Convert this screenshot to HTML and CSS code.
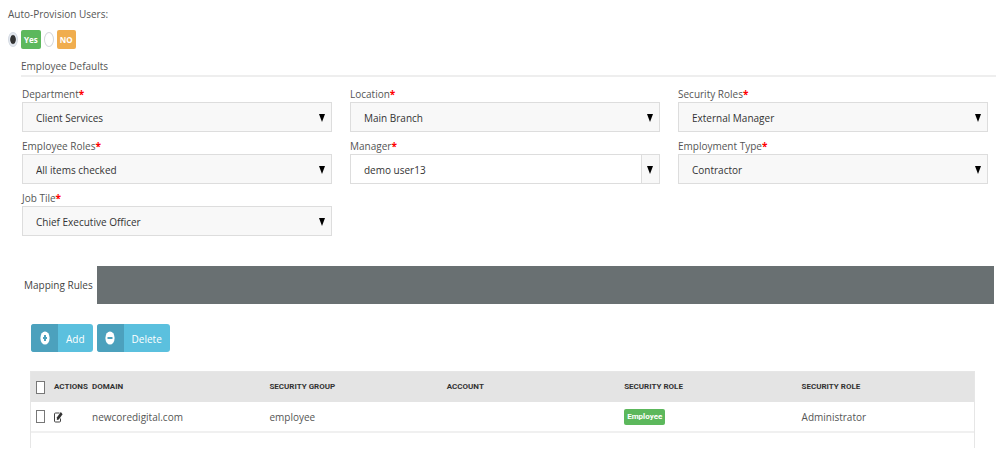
FILE: index.html
```html
<!DOCTYPE html>
<html lang="en">
<head>
    <meta charset="UTF-8">
    <meta name="viewport" content="width=device-width, initial-scale=1.0">
    <title>User Provisioning</title>
    <link rel="stylesheet" href="styles.css">
</head>
<body>
    <form class="provision-form">
        <fieldset class="provision">
            <legend>Auto-Provision Users:</legend>
            <div class="radio-row">
                <input type="radio" id="auto-yes" name="auto" value="yes" checked>
                <label for="auto-yes" class="badge badge-success">Yes</label>
                <input type="radio" id="auto-no" name="auto" value="no">
                <label for="auto-no" class="badge badge-warning">NO</label>
            </div>
        </fieldset>

        <section class="defaults">
            <h2>Employee Defaults</h2>
            <div class="fields">
                <div class="field">
                    <label for="department">Department<span class="required">*</span></label>
                    <div class="select-wrap">
                        <select id="department"><option>Client Services</option></select>
                    </div>
                </div>
                <div class="field">
                    <label for="location">Location<span class="required">*</span></label>
                    <div class="select-wrap">
                        <select id="location"><option>Main Branch</option></select>
                    </div>
                </div>
                <div class="field">
                    <label for="security-roles">Security Roles<span class="required">*</span></label>
                    <div class="select-wrap">
                        <select id="security-roles"><option>External Manager</option></select>
                    </div>
                </div>
                <div class="field">
                    <label for="employee-roles">Employee Roles<span class="required">*</span></label>
                    <div class="select-wrap">
                        <select id="employee-roles"><option>All items checked</option></select>
                    </div>
                </div>
                <div class="field">
                    <label for="manager">Manager<span class="required">*</span></label>
                    <div class="select-wrap combo">
                        <select id="manager"><option>demo user13</option></select>
                    </div>
                </div>
                <div class="field">
                    <label for="employment-type">Employment Type<span class="required">*</span></label>
                    <div class="select-wrap">
                        <select id="employment-type"><option>Contractor</option></select>
                    </div>
                </div>
                <div class="field">
                    <label for="job-title">Job Tile<span class="required">*</span></label>
                    <div class="select-wrap">
                        <select id="job-title"><option>Chief Executive Officer</option></select>
                    </div>
                </div>
            </div>
        </section>
    </form>

    <nav class="tabs">
        <a href="#mapping-rules" class="tab">Mapping Rules</a>
    </nav>

    <section id="mapping-rules" class="rules">
        <div class="toolbar">
            <button type="button" class="btn">
                <span class="btn-icon">
                    <svg viewBox="0 0 10 14" width="10" height="14" aria-hidden="true">
                        <ellipse cx="5" cy="7" rx="4.6" ry="6.6" fill="#fff"/>
                        <path d="M5 4v6M3 7h4" stroke="#4ca1bd" stroke-width="2"/>
                    </svg>
                </span>
                <span class="btn-text">Add</span>
            </button>
            <button type="button" class="btn">
                <span class="btn-icon">
                    <svg viewBox="0 0 10 14" width="10" height="14" aria-hidden="true">
                        <ellipse cx="5" cy="7" rx="4.6" ry="6.6" fill="#fff"/>
                        <path d="M2.5 7h5" stroke="#4ca1bd" stroke-width="2"/>
                    </svg>
                </span>
                <span class="btn-text">Delete</span>
            </button>
        </div>

        <div class="grid">
            <table>
                <colgroup>
                    <col class="col-check">
                    <col class="col-actions">
                    <col span="5">
                </colgroup>
                <thead>
                    <tr>
                        <th><input type="checkbox" aria-label="Select all"></th>
                        <th>ACTIONS</th>
                        <th>DOMAIN</th>
                        <th>SECURITY GROUP</th>
                        <th>ACCOUNT</th>
                        <th>SECURITY ROLE</th>
                        <th>SECURITY ROLE</th>
                    </tr>
                </thead>
                <tbody>
                    <tr>
                        <td><input type="checkbox" aria-label="Select row"></td>
                        <td>
                            <button type="button" class="edit" aria-label="Edit">
                                <svg viewBox="0 0 9 12" width="9" height="12" aria-hidden="true">
                                    <path d="M5.5 2H1.5Q.5 2 .5 3V10Q.5 11 1.5 11H5.5Q6.5 11 6.5 10V7.5" fill="none" stroke="#444"/>
                                    <path d="M3 6.2L6.8 1 8.6 3.2 4.8 8.6 2.8 9z" fill="#333"/>
                                </svg>
                            </button>
                        </td>
                        <td>newcoredigital.com</td>
                        <td>employee</td>
                        <td></td>
                        <td><span class="badge badge-success badge-role">Employee</span></td>
                        <td>Administrator</td>
                    </tr>
                </tbody>
            </table>
        </div>
    </section>
</body>
</html>
```

FILE: styles.css
```css
* { box-sizing: border-box; }

body {
    margin: 0;
    padding: 6px 8px 16px;
    background: #fff;
    color: #555;
    font-family: "Open Sans", sans-serif;
    font-size: 10px;
    line-height: 16px;
}

button, select, input { font: inherit; margin: 0; }

/* auto provision */
.provision { border: 0; margin: 0; padding: 0; }
.provision legend { padding: 0; }
.radio-row {
    display: flex;
    align-items: center;
    gap: 3px;
    margin-top: 8px;
}
.radio-row input {
    appearance: none;
    width: 10px;
    height: 15px;
    border: 1px solid #d5d8dc;
    border-radius: 50%;
    background: #fff;
}
.radio-row input:checked {
    border-color: #d5dbe3;
    background: radial-gradient(ellipse at center, #333 42%, #e4e9f0 56%);
}

.badge {
    border-radius: 2px;
    color: #fff;
    font-size: 8px;
    font-weight: bold;
    line-height: 19px;
    padding: 0 3px;
}
.badge-success { background: #5cb85c; }
.badge-warning { background: #f0ad4e; }
.badge-role {
    display: inline-block;
    font-family: Roboto, sans-serif;
    line-height: 16px;
    vertical-align: middle;
}

/* employee defaults */
.defaults { margin: 9px 0 0 13px; }
.defaults h2 {
    margin: 0;
    padding-bottom: 1px;
    border-bottom: 2px solid #eee;
    font-size: 10px;
    font-weight: normal;
}
.fields {
    display: grid;
    grid-template-columns: repeat(3, 1fr);
    column-gap: 18px;
    row-gap: 6px;
    margin: 9px 8px 0 1px;
}
.field label { display: block; }
.required { color: #f00; font-weight: bold; }

.select-wrap {
    position: relative;
    height: 30px;
    border: 1px solid #ddd;
    background: #f8f8f8;
}
.select-wrap::after {
    content: "";
    position: absolute;
    right: 6px;
    top: 11px;
    border: 3px solid transparent;
    border-top: 8px solid #000;
    border-bottom: 0;
    pointer-events: none;
}
.select-wrap select {
    appearance: none;
    width: 100%;
    height: 100%;
    padding: 2px 24px 0 13px;
    border: 0;
    background: transparent;
    color: #333;
}
.combo { background: linear-gradient(to left, #f8f8f8 17px, #ddd 17px, #ddd 18px, #fff 18px); }

/* tabs */
.tabs {
    display: flex;
    margin: 30px 2px 0 4px;
    background: #697072;
}
.tab {
    padding: 12px 4px 12px 12px;
    background: #fff;
    color: #444;
    line-height: 14px;
    text-decoration: none;
}

/* mapping rules */
.rules { padding: 20px 21px 0 22px; }
.toolbar { display: flex; gap: 4px; padding-left: 1px; }
.btn {
    display: flex;
    height: 28px;
    padding: 0;
    overflow: hidden;
    border: 0;
    border-radius: 3px;
    background: #5bc0de;
    color: #fff;
}
.btn-icon {
    display: flex;
    align-items: center;
    justify-content: center;
    width: 27px;
    height: 100%;
    background: #4ca1bd;
}
.btn-text { padding: 0 8px; line-height: 30px; }

.grid {
    min-height: 77px;
    margin-top: 19px;
    border: 1px solid #e6e6e6;
    border-bottom: 0;
}
table {
    width: 100%;
    border-collapse: collapse;
    table-layout: fixed;
}
.col-check { width: 18px; }
.col-actions { width: 38px; }
th, td { padding: 0 0 0 5px; text-align: left; }
th {
    height: 30px;
    background: #e4e4e4;
    color: #333;
    font-family: Roboto, sans-serif;
    font-size: 8px;
    white-space: nowrap;
}
td {
    height: 30px;
    border-bottom: 2px solid #f0f0f0;
}
table input {
    appearance: none;
    display: block;
    width: 9px;
    height: 13px;
    border: 1px solid #777;
    background: #fff;
}
.edit {
    display: block;
    padding: 0;
    border: 0;
    background: none;
}
.edit svg { display: block; }
```
